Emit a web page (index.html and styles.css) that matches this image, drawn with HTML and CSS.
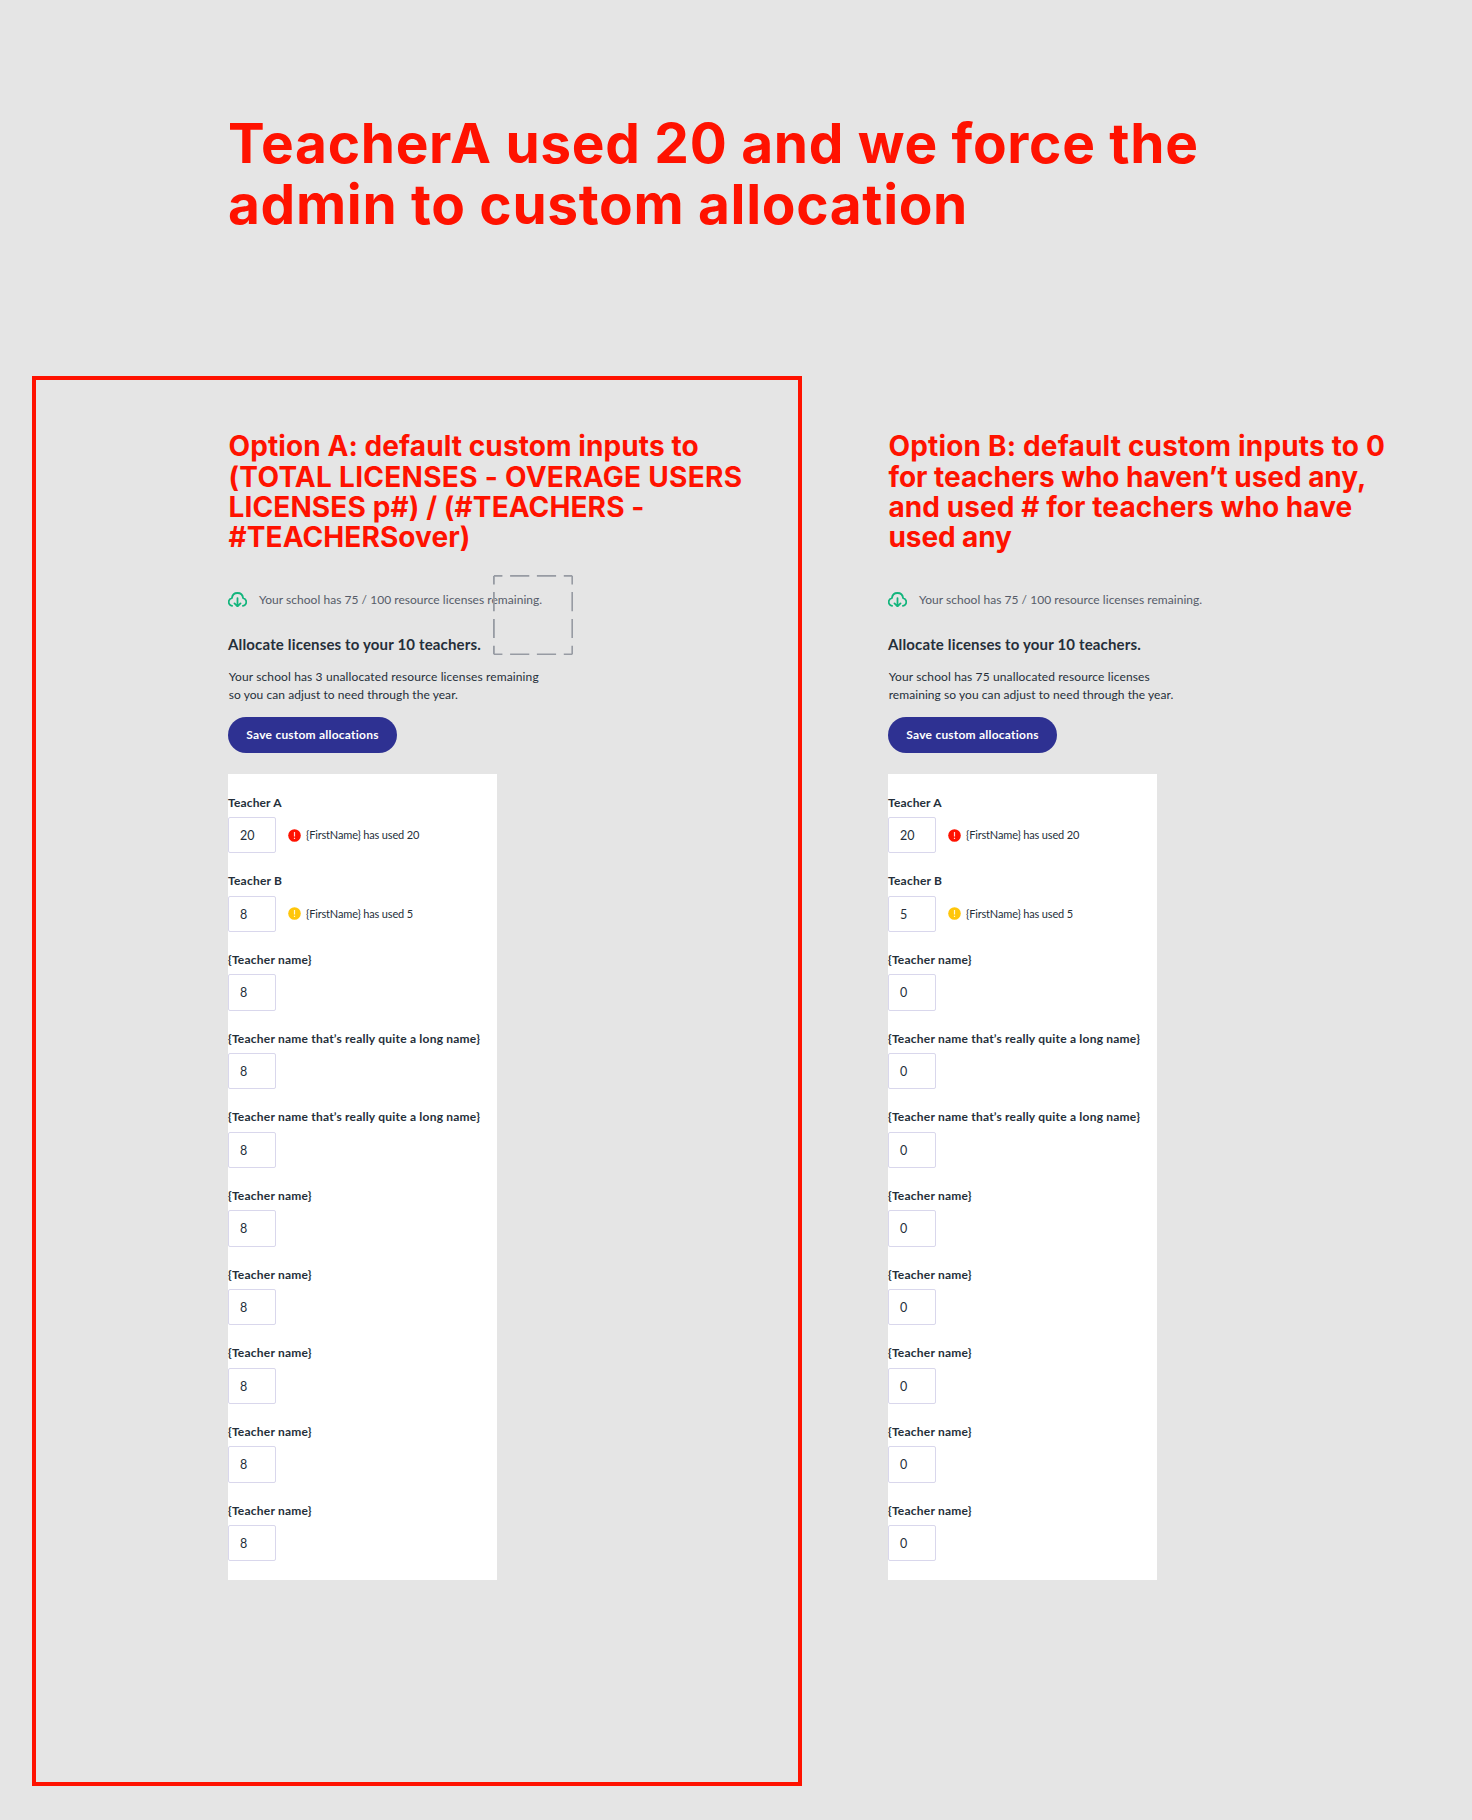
FILE: index.html
```
<!DOCTYPE html>
<html lang="en">
<head>
<meta charset="utf-8">
<title>Custom allocation options</title>
<link rel="stylesheet" href="styles.css">
</head>
<body>
<svg class="defs" width="0" height="0" aria-hidden="true">
  <symbol id="cloud" viewBox="0 0 19 15.5">
    <path d="M4.1 13.9A3.9 3.9 0 0 1 1.2 8.2C1.6 7.1 2.5 6.4 3.9 6.1C4.3 3 6.5 1 9.5 1s5.2 2 5.6 5.1c1.4.3 2.3 1 2.7 2.1a3.9 3.9 0 0 1-2.9 5.7M9.5 6.2v8M6.5 11.4l3 3l3-3" fill="none" stroke="#12b57c" stroke-width="1.8" stroke-linecap="round" stroke-linejoin="round"/>
  </symbol>
  <symbol id="alert" viewBox="0 0 13 13">
    <circle cx="6.5" cy="6.5" r="6.3" fill="currentColor"/>
    <path d="M6.5 3v4.4M6.5 8.8v1.3" stroke="#fff" stroke-opacity=".85" stroke-width="1.2"/>
  </symbol>
</svg>
<h1 class="title"><span class="t1">TeacherA used 20 and we force the</span><span class="t2">admin to custom allocation</span></h1>
<main class="options">
  <section class="option framed">
    <h2 class="name"><span class="a1">Option A: default custom inputs to</span><span class="a2">(TOTAL LICENSES - OVERAGE USERS</span><span class="a3">LICENSES p#) / (#TEACHERS -</span><span class="a4">#TEACHERSover)</span></h2>
    <p class="notice"><svg class="cloud"><use href="#cloud"/></svg><span>Your school has 75 / 100 resource licenses remaining.</span></p>
    <h3 class="sub">Allocate licenses to your 10 teachers.</h3>
    <p class="text"><span class="p1">Your school has 3 unallocated resource licenses remaining</span><span class="p2">so you can adjust to need through the year.</span></p>
    <button class="save">Save custom allocations</button>
    <div class="panel">
      <div class="field"><label class="ta">Teacher A</label><div class="line"><div class="input">20</div><svg class="alert red"><use href="#alert"/></svg><span class="used">{FirstName} has used 20</span></div></div>
      <div class="field"><label>Teacher B</label><div class="line"><div class="input">8</div><svg class="alert yellow"><use href="#alert"/></svg><span class="used">{FirstName} has used 5</span></div></div>
      <div class="field"><label>{Teacher name}</label><div class="input">8</div></div>
      <div class="field"><label>{Teacher name that’s really quite a long name}</label><div class="input">8</div></div>
      <div class="field"><label>{Teacher name that’s really quite a long name}</label><div class="input">8</div></div>
      <div class="field"><label>{Teacher name}</label><div class="input">8</div></div>
      <div class="field"><label>{Teacher name}</label><div class="input">8</div></div>
      <div class="field"><label>{Teacher name}</label><div class="input">8</div></div>
      <div class="field"><label>{Teacher name}</label><div class="input">8</div></div>
      <div class="field"><label>{Teacher name}</label><div class="input">8</div></div>
    </div>
    <svg class="marquee" viewBox="0 0 80.2 80.2"><rect x=".9" y=".9" width="78.4" height="78.4" fill="none" stroke="#979ba3" stroke-width="1.8" stroke-dasharray="8.5 7.7 19.2 7.6 19.2 7.7 8.5 0"/></svg>
  </section>
  <section class="option">
    <h2 class="name"><span class="b1">Option B: default custom inputs to 0</span><span class="b2">for teachers who haven’t used any,</span><span class="b3">and used # for teachers who have</span><span class="b4">used any</span></h2>
    <p class="notice"><svg class="cloud"><use href="#cloud"/></svg><span>Your school has 75 / 100 resource licenses remaining.</span></p>
    <h3 class="sub">Allocate licenses to your 10 teachers.</h3>
    <p class="text"><span class="p1">Your school has 75 unallocated resource licenses</span><span class="p2">remaining so you can adjust to need through the year.</span></p>
    <button class="save">Save custom allocations</button>
    <div class="panel">
      <div class="field"><label class="ta">Teacher A</label><div class="line"><div class="input">20</div><svg class="alert red"><use href="#alert"/></svg><span class="used">{FirstName} has used 20</span></div></div>
      <div class="field"><label>Teacher B</label><div class="line"><div class="input">5</div><svg class="alert yellow"><use href="#alert"/></svg><span class="used">{FirstName} has used 5</span></div></div>
      <div class="field"><label>{Teacher name}</label><div class="input">0</div></div>
      <div class="field"><label>{Teacher name that’s really quite a long name}</label><div class="input">0</div></div>
      <div class="field"><label>{Teacher name that’s really quite a long name}</label><div class="input">0</div></div>
      <div class="field"><label>{Teacher name}</label><div class="input">0</div></div>
      <div class="field"><label>{Teacher name}</label><div class="input">0</div></div>
      <div class="field"><label>{Teacher name}</label><div class="input">0</div></div>
      <div class="field"><label>{Teacher name}</label><div class="input">0</div></div>
      <div class="field"><label>{Teacher name}</label><div class="input">0</div></div>
    </div>
  </section>
</main>
</body>
</html>
```
FILE: styles.css
```
* { box-sizing: border-box; }
body { margin: 0; padding-top: 113px; height: 1820px; overflow: hidden; background: #e5e5e5; color: #252f3a; font-family: Lato, "Open Sans", sans-serif; }
h1, h2, h3, p { margin: 0; }
h1 span, h2 span, .text span { display: block; white-space: nowrap; }
.defs { display: block; height: 0; }

.title { margin-left: 228px; height: 263px; font: 700 55px/61px Inter, sans-serif; color: #ff1200; }
.t1 { letter-spacing: .68px; }
.t2 { letter-spacing: .67px; }

.options { display: grid; grid-template-columns: 770px 560px; column-gap: 86px; margin-left: 32px; }
.option { position: relative; height: 1410px; padding-top: 55.4px; display: flex; flex-direction: column; align-items: flex-start; }
.framed { border: 4px solid #ff1200; padding: 51.4px 0 0 192px; }

.name { height: 160px; padding-left: .5px; font: 700 28px/30.33px Inter, sans-serif; color: #ff1200; }
.a1 { letter-spacing: .09px; }
.a2 { letter-spacing: .28px; }
.a3 { letter-spacing: .12px; }
.a4 { letter-spacing: .1px; }
.b1 { letter-spacing: .172px; }
.b2 { letter-spacing: -.045px; }
.b3 { letter-spacing: .08px; }
.b4 { letter-spacing: -.112px; }

.notice { display: flex; align-items: center; height: 18px; font-size: 12px; line-height: 18px; letter-spacing: .035px; color: #565c69; white-space: nowrap; }
.cloud { width: 19px; height: 15.5px; margin: -2px 12px 0 0; }
.sub { margin-top: 25px; font-size: 15px; line-height: 20px; font-weight: 700; letter-spacing: .155px; white-space: nowrap; }
.text { margin: 14px 0 12.5px .7px; font-size: 12px; line-height: 18px; }
.p1 { letter-spacing: .125px; }
.p2 { letter-spacing: .06px; }
.save { width: 169px; height: 36.5px; padding: 0; border: 0; border-radius: 19px; background: #2e3192; color: #fff; font: 700 12px/36.5px Lato, sans-serif; letter-spacing: .22px; white-space: nowrap; }

.panel { display: flex; flex-direction: column; gap: 19.1px; width: 269.3px; margin-top: 21px; padding: 19.2px 0 18.4px; background: #fff; }
.field { height: 59.6px; }
.field label { display: block; height: 16px; margin-bottom: 7.3px; font-size: 12px; line-height: 17px; font-weight: 700; letter-spacing: .215px; white-space: nowrap; }
.field .ta { letter-spacing: .15px; }
.line { display: flex; align-items: center; }
.input { width: 48px; height: 36.3px; padding-left: 11px; border: 1px solid #d9d7ec; border-radius: 2px; font-size: 12.5px; line-height: 35.4px; }
.alert { width: 13px; height: 13px; margin: 0 5px 0 12px; }
.red { color: #ff1200; }
.yellow { color: #ffc60b; }
.used { font-size: 11px; line-height: 14px; letter-spacing: -.16px; white-space: nowrap; }

.marquee { position: absolute; left: 457.2px; top: 194.9px; width: 80.2px; height: 80.2px; }
```
